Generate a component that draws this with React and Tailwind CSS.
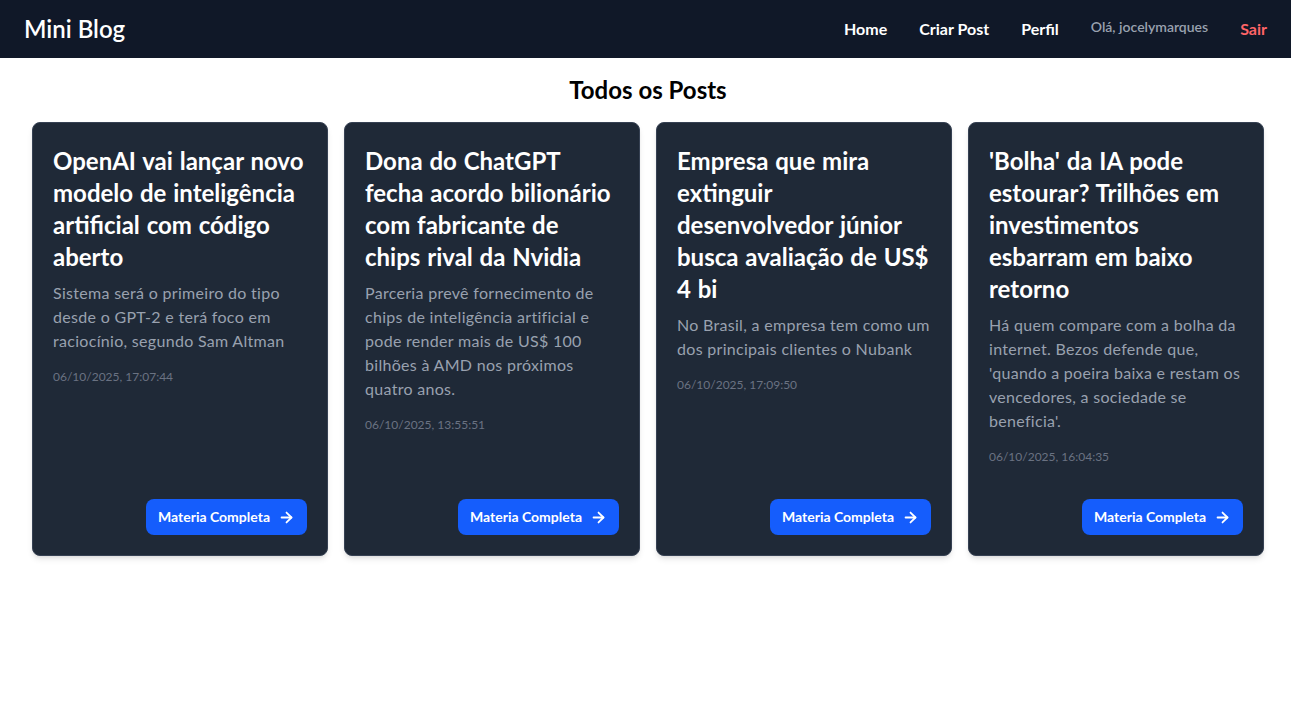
import React from 'react';
import { ArrowRight } from 'lucide-react';

const posts = [
  {
    id: 1,
    title: 'OpenAI vai lançar novo modelo de inteligência artificial com código aberto',
    summary: 'Sistema será o primeiro do tipo desde o GPT-2 e terá foco em raciocínio, segundo Sam Altman',
    date: '06/10/2025, 17:07:44'
  },
  {
    id: 2,
    title: 'Dona do ChatGPT fecha acordo bilionário com fabricante de chips rival da Nvidia',
    summary: 'Parceria prevê fornecimento de chips de inteligência artificial e pode render mais de US$ 100 bilhões à AMD nos próximos quatro anos.',
    date: '06/10/2025, 13:55:51'
  },
  {
    id: 3,
    title: 'Empresa que mira extinguir desenvolvedor júnior busca avaliação de US$ 4 bi',
    summary: 'No Brasil, a empresa tem como um dos principais clientes o Nubank',
    date: '06/10/2025, 17:09:50'
  },
  {
    id: 4,
    title: "'Bolha' da IA pode estourar? Trilhões em investimentos esbarram em baixo retorno",
    summary: "Há quem compare com a bolha da internet. Bezos defende que, 'quando a poeira baixa e restam os vencedores, a sociedade se beneficia'.",
    date: '06/10/2025, 16:04:35'
  }
];

const PostCard = ({ post }) => (
  <div className="flex flex-col bg-[#1f2937] border border-[#364153] rounded-lg shadow-md px-5 pt-[22px] pb-5">
    <div>
      <h2 className="text-2xl font-bold text-white mb-2 [word-spacing:1px]">{post.title}</h2>
      <p className="text-base text-[#99a1af] tracking-[0.3px]">{post.summary}</p>
      <p className="text-xs text-[#6a7282] mt-4">{post.date}</p>
    </div>
    <div className="mt-auto pt-[34px] flex justify-end">
      <button className="flex items-center gap-2 bg-[#155dfc] hover:bg-blue-700 text-white text-sm font-bold px-3 h-9 rounded-lg">
        Materia Completa
        <ArrowRight size={17} strokeWidth={2.5} />
      </button>
    </div>
  </div>
);

export default function App() {
  return (
    <div className="min-h-screen bg-white" style={{ fontFamily: 'Lato, "Noto Sans", sans-serif' }}>
      {/* Header */}
      <header className="h-[58px] bg-[#101828] flex items-center justify-between px-6">
        <h1 className="text-2xl font-semibold text-white">Mini Blog</h1>
        <nav className="flex items-center gap-8">
          <a href="#" className="text-base font-bold text-white">Home</a>
          <a href="#" className="text-base font-bold text-white">Criar Post</a>
          <a href="#" className="text-base font-bold text-white">Perfil</a>
          <span className="text-sm font-semibold text-[#99a1af] -mt-1">Olá, jocelymarques</span>
          <button className="text-base font-bold text-[#ff6467]">Sair</button>
        </nav>
      </header>

      {/* Posts */}
      <main className="pl-8 pr-[27px] pt-4">
        <h2 className="text-2xl font-bold text-black text-center mb-4">Todos os Posts</h2>
        <div className="grid grid-cols-4 gap-4">
          {posts.map(post => (
            <PostCard key={post.id} post={post} />
          ))}
        </div>
      </main>
    </div>
  );
}
